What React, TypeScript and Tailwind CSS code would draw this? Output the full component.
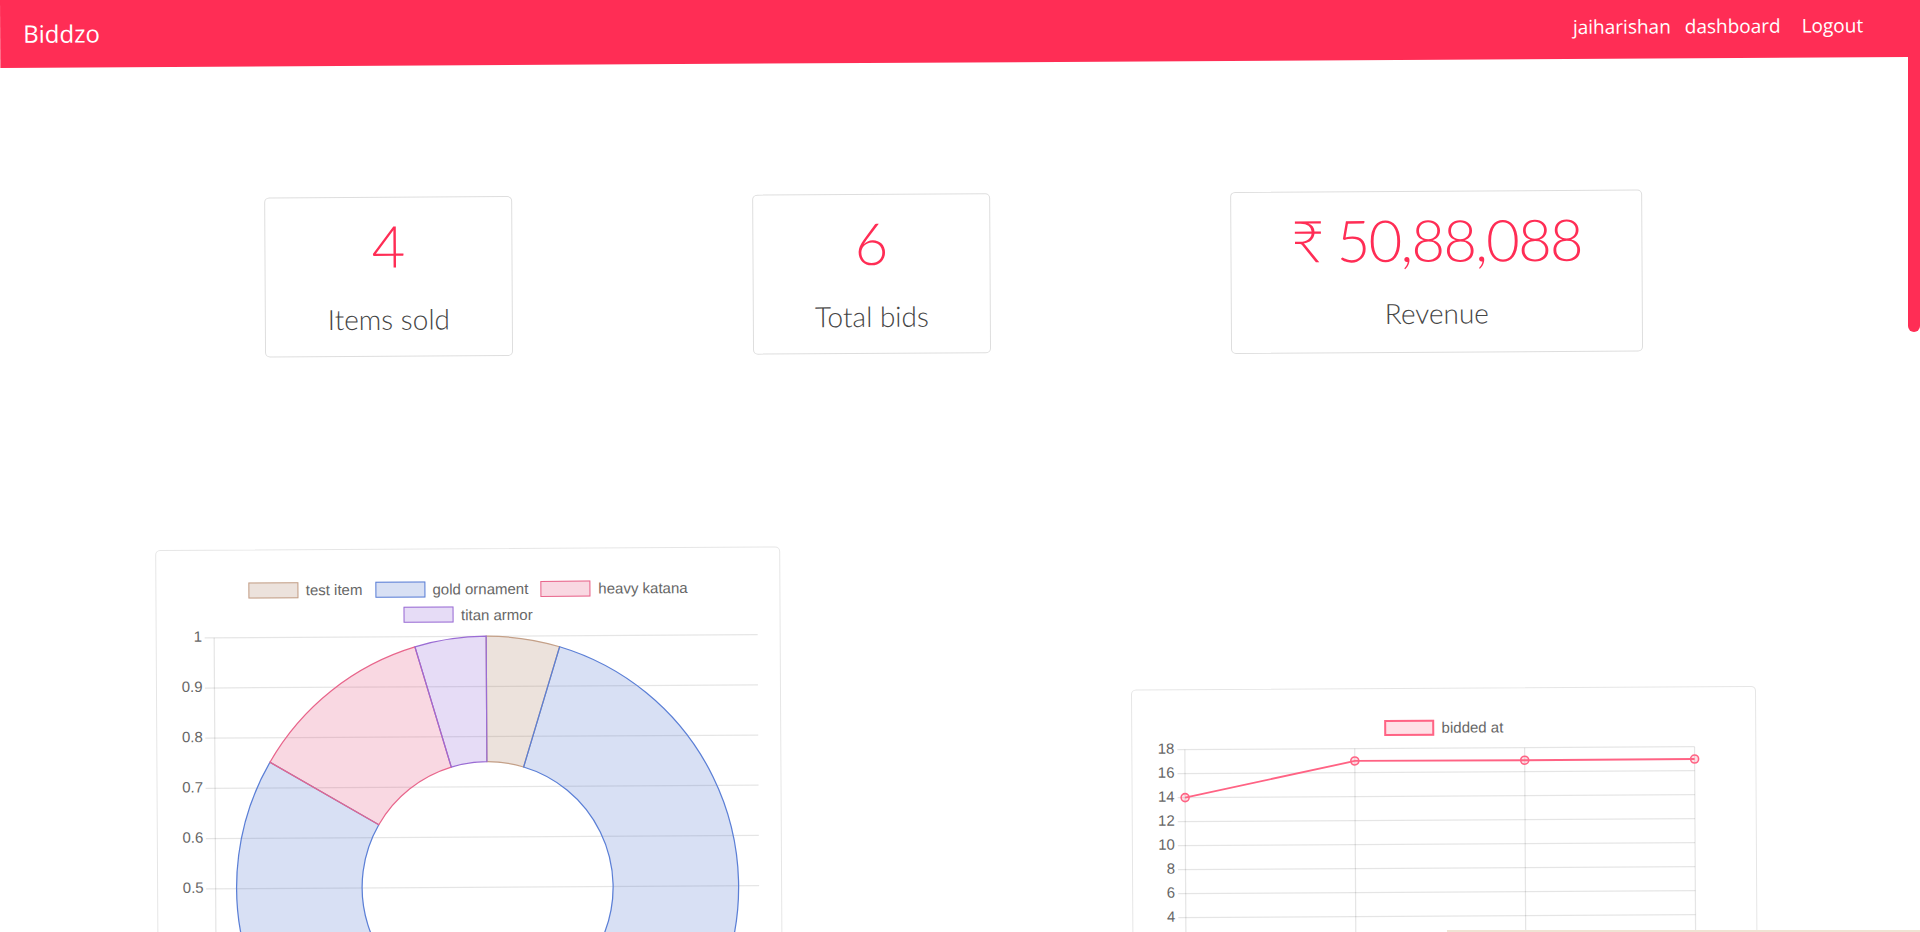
const slices = [
  { label: "test item", from: 0, to: 17, fill: "rgba(160,110,80,0.2)", stroke: "#c4a088" },
  { label: "gold ornament", from: 17, to: 300.2, fill: "rgba(60,100,200,0.2)", stroke: "#5b7fd6" },
  { label: "heavy katana", from: 300.2, to: 343.5, fill: "rgba(225,60,110,0.2)", stroke: "#e8668c" },
  { label: "titan armor", from: 343.5, to: 360, fill: "rgba(130,80,210,0.2)", stroke: "#9a6cd4" },
];

const bids = [14, 16.97, 16.95, 16.97];

function polar(cx: number, cy: number, r: number, deg: number) {
  const a = (deg * Math.PI) / 180;
  return [cx + r * Math.sin(a), cy - r * Math.cos(a)];
}

function sector(cx: number, cy: number, R: number, r: number, a0: number, a1: number) {
  const [x0, y0] = polar(cx, cy, R, a0);
  const [x1, y1] = polar(cx, cy, R, a1);
  const [x2, y2] = polar(cx, cy, r, a1);
  const [x3, y3] = polar(cx, cy, r, a0);
  const large = a1 - a0 > 180 ? 1 : 0;
  return `M${x0} ${y0} A${R} ${R} 0 ${large} 1 ${x1} ${y1} L${x2} ${y2} A${r} ${r} 0 ${large} 0 ${x3} ${y3} Z`;
}

function LegendItem({ label, fill, stroke, thick }: { label: string; fill: string; stroke: string; thick?: boolean }) {
  return (
    <div className="flex items-center">
      <span
        className={thick ? "h-[16px] w-[50px] border-2" : "h-[16px] w-[50px] border-[1.5px]"}
        style={{ background: fill, borderColor: stroke }}
      />
      <span className="ml-[7.5px] text-[15px] leading-none text-[#666]">{label}</span>
    </div>
  );
}

function DoughnutCard() {
  const cx = 329.5;
  const cy = 261;
  // only the ticks that fall inside the window (1 .. 0.5)
  const ticks = [0, 1, 2, 3, 4, 5];
  return (
    <div className="h-[640px] w-[625px] rounded-[5px] border border-[#e6e6e6] bg-white font-['Liberation_Sans',Arial,sans-serif]">
      <div className="flex h-[77.5px] flex-col pt-[28px]">
        <div className="flex h-[24px] items-center justify-center gap-[12.5px]">
          {slices.slice(0, 3).map((s) => (
            <LegendItem key={s.label} {...s} />
          ))}
        </div>
        <div className="mt-[1.5px] flex h-[24px] items-center justify-center">
          <LegendItem {...slices[3]} />
        </div>
      </div>
      <svg width="623" height="545" className="block">
        {[...ticks, 6, 7, 8, 9, 10].map((i) => {
          const y = 10 + i * 50.2;
          return <line key={i} x1="48" x2="601" y1={y} y2={y} stroke="rgba(0,0,0,0.1)" strokeWidth="1.25" />;
        })}
        {ticks.map((i) => (
          <text key={i} x="45.5" y={10 + i * 50.2} textAnchor="end" dominantBaseline="middle" fontSize="15" fill="#666">
            {i === 0 ? "1" : (1 - i * 0.1).toFixed(1)}
          </text>
        ))}
        <line x1="57.5" x2="57.5" y1="10" y2="512" stroke="rgba(0,0,0,0.1)" strokeWidth="1.25" />
        {slices.map((s) => (
          <path
            key={s.label}
            d={sector(cx, cy, 251, 125.5, s.from, s.to)}
            fill={s.fill}
            stroke={s.stroke}
            strokeWidth="1.25"
          />
        ))}
      </svg>
    </div>
  );
}

function LineCard() {
  const yOf = (v: number) => 6.4 + (18 - v) * 12;
  const xOf = (i: number) => 52.5 + i * 169.9;
  const ticks = [18, 16, 14, 12, 10, 8, 6, 4];
  return (
    <div className="mt-[145px] h-[326px] w-[625px] rounded-[5px] border border-[#e6e6e6] bg-white font-['Liberation_Sans',Arial,sans-serif]">
      <div className="flex h-[53.3px] items-start justify-center pt-[31.3px]">
        <LegendItem label="bidded at" fill="rgba(255,99,132,0.2)" stroke="#ff6384" thick />
      </div>
      <svg width="623" height="268" className="block">
        {[...ticks, 2, 0].map((v) => (
          <line key={v} x1="45" x2={xOf(3)} y1={yOf(v)} y2={yOf(v)} stroke="rgba(0,0,0,0.1)" strokeWidth="1.25" />
        ))}
        {ticks.map((v) => (
          <text key={v} x="42" y={yOf(v)} textAnchor="end" dominantBaseline="middle" fontSize="15" fill="#666">
            {v}
          </text>
        ))}
        {[0, 1, 2, 3].map((i) => (
          <line key={i} x1={xOf(i)} x2={xOf(i)} y1={yOf(18)} y2={yOf(0) + 7.5} stroke="rgba(0,0,0,0.1)" strokeWidth="1.25" />
        ))}
        <polyline
          points={bids.map((v, i) => `${xOf(i)},${yOf(v)}`).join(" ")}
          fill="none"
          stroke="#ff6384"
          strokeWidth="1.8"
        />
        {bids.map((v, i) => (
          <circle key={i} cx={xOf(i)} cy={yOf(v)} r="4" fill="rgba(255,99,132,0.2)" stroke="#ff6384" strokeWidth="1.6" />
        ))}
      </svg>
    </div>
  );
}

function StatCard({ value, label, box, wide }: { value: string; label: string; box: string; wide?: boolean }) {
  return (
    <div className={`flex flex-col items-center rounded-[5px] border border-[#dedede] bg-white pt-[19px] font-['Lato','Noto_Sans',sans-serif] ${box}`}>
      <div className={wide ? "text-[58px] font-light leading-none tracking-[-0.03em] text-[#ff2d55]" : "text-[58px] font-light leading-none text-[#ff2d55]"}>
        {value}
      </div>
      <div className="mt-[30px] text-[28px] font-light leading-none text-[#454545]">{label}</div>
    </div>
  );
}

export default function App() {
  return (
    <div className="relative flex h-[932px] w-[1920px] overflow-hidden bg-white">
      <div className="relative h-full w-[1908px] overflow-hidden">
        {/* the whole page sits a hair off level in the reference */}
        <div className="w-[1908px] origin-top-left rotate-[-0.33deg]">
          <header className="flex h-[68px] items-center bg-[#ff2d55] pl-[23px] pr-[45px] font-['Open_Sans',sans-serif] text-white">
            <span className="text-[24px] leading-[36px]">Biddzo</span>
            <nav className="ml-auto flex items-center pt-[4px] text-[19px] leading-[28px]">
              <a>jaiharishan</a>
              <a className="ml-[14px]">dashboard</a>
              <a className="ml-[21px]">Logout</a>
            </nav>
          </header>

          <section className="mt-[131px] flex items-start gap-[240px] pl-[263px]">
            <StatCard value="4" label="Items sold" box="h-[160px] w-[248px]" />
            <StatCard value="6" label="Total bids" box="h-[160px] w-[238px]" />
            <StatCard value="₹ 50,88,088" label="Revenue" box="h-[162px] w-[412px]" wide />
          </section>

          <section className="mt-[189.5px] flex items-start gap-[350px] pl-[152px]">
            <DoughnutCard />
            <LineCard />
          </section>
        </div>
      </div>

      <div className="h-full w-[12px] bg-white">
        <div className="h-[332px] w-full rounded-b-[6px] bg-[#ff2d55]" />
      </div>

      <div className="absolute bottom-0 left-[1447px] right-0 h-[2px] bg-[#efe3d3]" />
    </div>
  );
}
